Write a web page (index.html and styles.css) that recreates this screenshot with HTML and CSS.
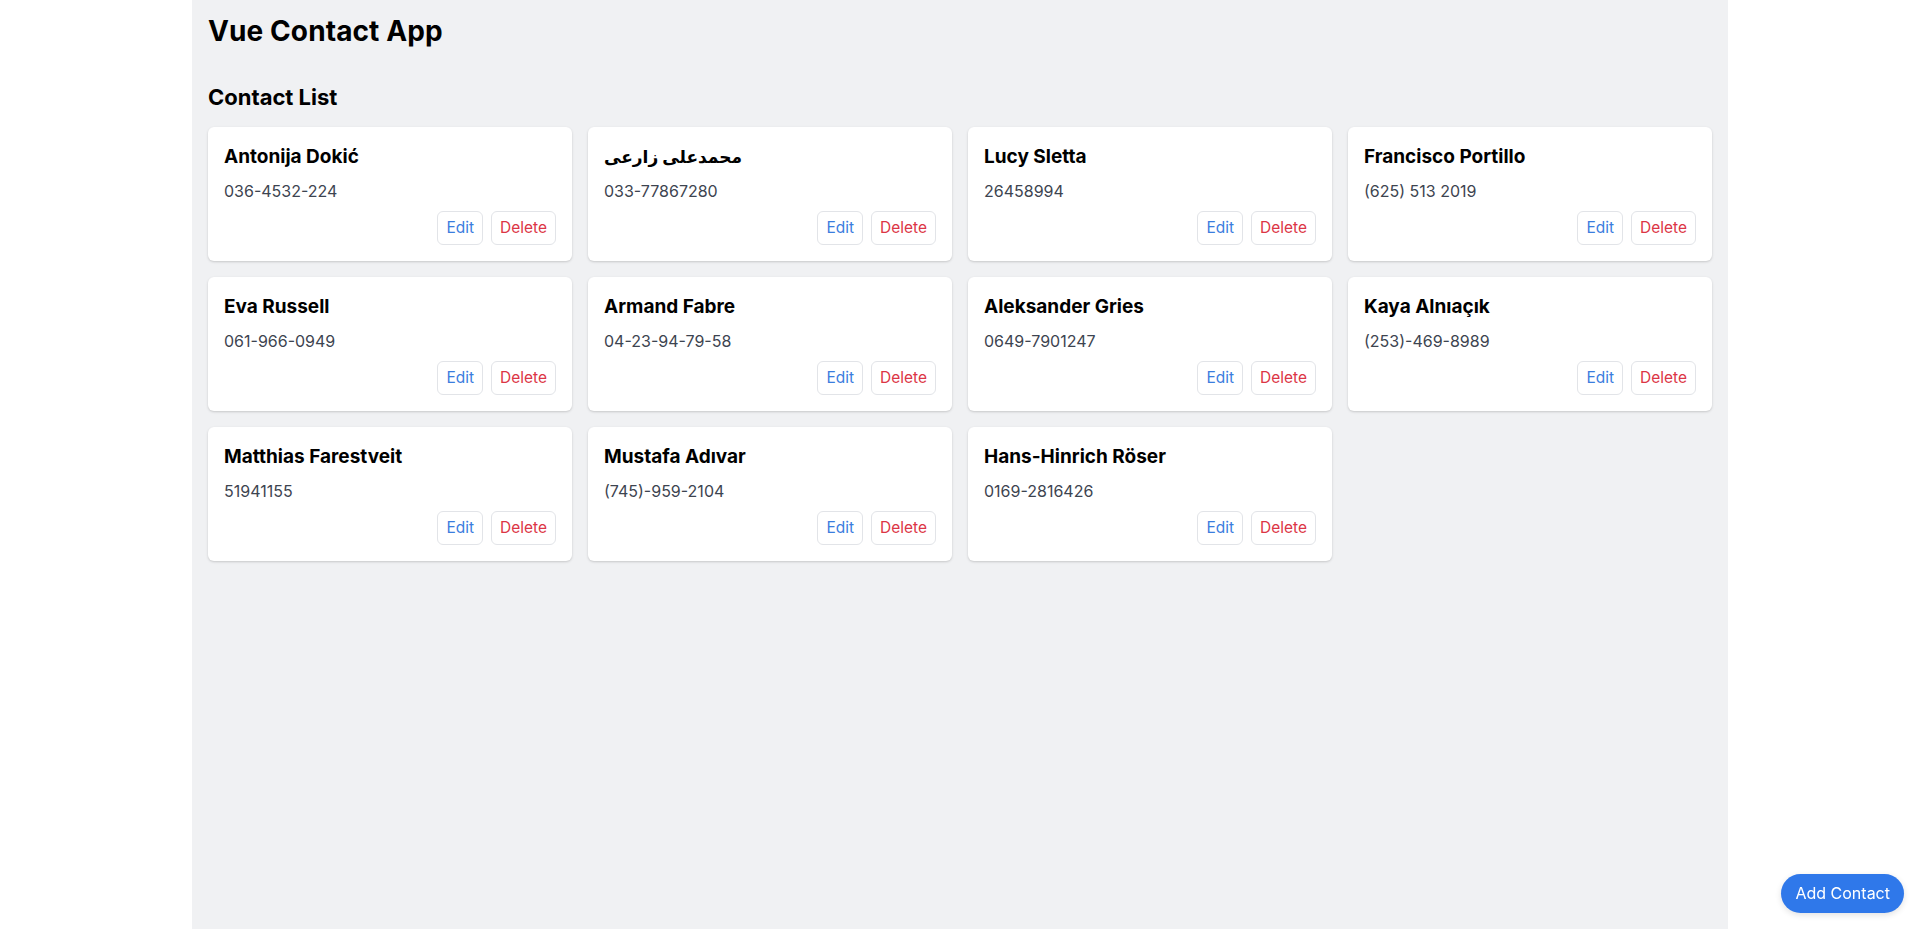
FILE: index.html
```html
<!DOCTYPE html>
<html lang="en">
<head>
<meta charset="utf-8">
<title>Vue Contact App</title>
<link rel="stylesheet" href="styles.css">
</head>
<body>
<div class="app">
  <h1 class="title">Vue Contact App</h1>
  <h2 class="subtitle">Contact List</h2>
  <div class="grid">
    <div class="card"><div class="name">Antonija Dokić</div><div class="phone">036-4532-224</div><div class="actions"><button class="btn edit">Edit</button><button class="btn del">Delete</button></div></div>
    <div class="card"><div class="name" dir="auto">محمدعلی زارعی</div><div class="phone">033-77867280</div><div class="actions"><button class="btn edit">Edit</button><button class="btn del">Delete</button></div></div>
    <div class="card"><div class="name">Lucy Sletta</div><div class="phone">26458994</div><div class="actions"><button class="btn edit">Edit</button><button class="btn del">Delete</button></div></div>
    <div class="card"><div class="name">Francisco Portillo</div><div class="phone">(625) 513 2019</div><div class="actions"><button class="btn edit">Edit</button><button class="btn del">Delete</button></div></div>
    <div class="card"><div class="name">Eva Russell</div><div class="phone">061-966-0949</div><div class="actions"><button class="btn edit">Edit</button><button class="btn del">Delete</button></div></div>
    <div class="card"><div class="name">Armand Fabre</div><div class="phone">04-23-94-79-58</div><div class="actions"><button class="btn edit">Edit</button><button class="btn del">Delete</button></div></div>
    <div class="card"><div class="name">Aleksander Gries</div><div class="phone">0649-7901247</div><div class="actions"><button class="btn edit">Edit</button><button class="btn del">Delete</button></div></div>
    <div class="card"><div class="name">Kaya Alnıaçık</div><div class="phone">(253)-469-8989</div><div class="actions"><button class="btn edit">Edit</button><button class="btn del">Delete</button></div></div>
    <div class="card"><div class="name">Matthias Farestveit</div><div class="phone">51941155</div><div class="actions"><button class="btn edit">Edit</button><button class="btn del">Delete</button></div></div>
    <div class="card"><div class="name">Mustafa Adıvar</div><div class="phone">(745)-959-2104</div><div class="actions"><button class="btn edit">Edit</button><button class="btn del">Delete</button></div></div>
    <div class="card"><div class="name">Hans-Hinrich Röser</div><div class="phone">0169-2816426</div><div class="actions"><button class="btn edit">Edit</button><button class="btn del">Delete</button></div></div>
  </div>
</div>
<button class="add-btn">Add Contact</button>
</body>
</html>
```

FILE: styles.css
```css
* { box-sizing: border-box; }
html, body { margin: 0; padding: 0; background: #ffffff; }
body {
  font-family: Inter, "DejaVu Sans", "Noto Sans", sans-serif;
  color: #000;
}
.app {
  width: 1536px;
  margin: 0 auto;
  min-height: 100vh;
  background: #f0f1f3;
  padding: 13px 16px 16px;
}
.title {
  margin: 0;
  font-size: 28px;
  line-height: 36px;
  font-weight: 700;
  letter-spacing: 0.1px;
}
.subtitle {
  margin: 34px 0 16px;
  font-size: 22px;
  line-height: 28px;
  font-weight: 700;
}
.grid {
  display: grid;
  grid-template-columns: repeat(4, 1fr);
  gap: 16px;
}
.card {
  background: #fff;
  border-radius: 6px;
  padding: 16px;
  box-shadow: 0 1px 3px rgba(0,0,0,0.12), 0 1px 2px rgba(0,0,0,0.06);
}
.name {
  font-size: 19px;
  line-height: 28px;
  font-weight: 700;
  text-align: left;
}
.name[dir="auto"] { font-size: 17px; }
.phone {
  margin-top: 8px;
  font-size: 16px;
  line-height: 24px;
  color: #3d4450;
}
.actions {
  display: flex;
  justify-content: flex-end;
  gap: 8px;
  margin-top: 8px;
}
.btn {
  font-family: inherit;
  font-size: 15.5px;
  line-height: 24px;
  padding: 4px 8px;
  background: #fff;
  border: 1px solid #e2e4e8;
  border-radius: 6px;
  cursor: pointer;
}
.edit { color: #3b7dde; }
.del { color: #dc3545; }
.add-btn {
  position: fixed;
  right: 16px;
  bottom: 16px;
  font-family: inherit;
  font-size: 16px;
  line-height: 23px;
  padding: 8px 14px;
  color: #fff;
  background: #2f78ea;
  border: none;
  border-radius: 999px;
  box-shadow: 0 2px 6px rgba(0,0,0,0.12);
}
```
